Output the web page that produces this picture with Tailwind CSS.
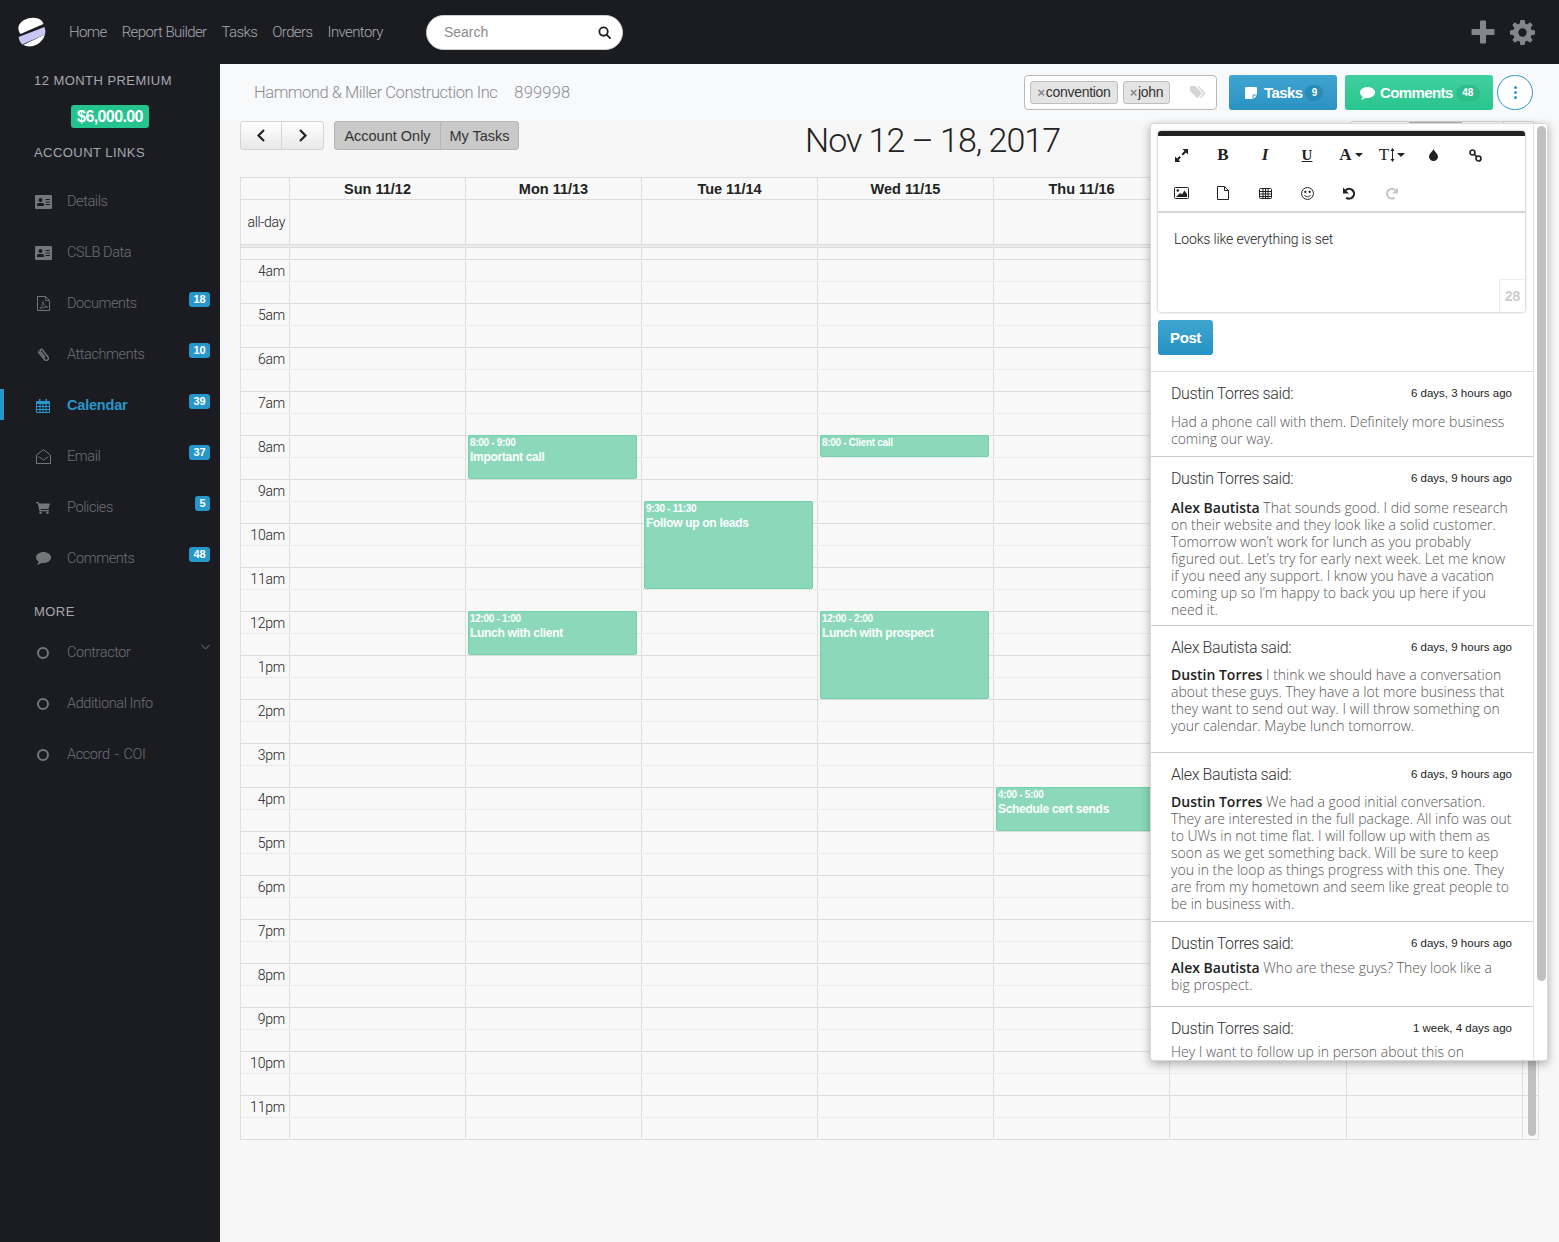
<!DOCTYPE html>
<html lang="en">
<head>
    <meta charset="UTF-8">
    <title>Calendar</title>
    <script src="https://cdn.jsdelivr.net/npm/@tailwindcss/browser@4"></script>
</head>
<body class="bg-[#f7f7f7] font-['Liberation_Sans',sans-serif]">
<div class="relative w-[1559px] h-[1242px] overflow-hidden">

    <!-- Top bar -->
    <header class="h-16 bg-[#1b1c22] flex items-center">
        <svg class="ml-[16px] w-[30px] h-[31px]" viewBox="0 0 30 31">
            <path d="M8 3 Q14 0 20 1 Q26 2 27.500 7 L4.500 17 Q1 12 3 8 Q5 4.500 8 3Z" fill="#fff"/>
            <path d="M28.500 10 Q30 14 29 17.500 L6 27.500 Q3 24 2.500 20Z" fill="#c9c6f5"/>
            <path d="M29 17.500 Q27 24 21 27.500 Q14 31 7 28Z" fill="#fff"/>
        </svg>
        <nav class="ml-[23px] flex gap-[15px] text-[15px] tracking-[-0.6px] text-[#a9abb0] font-['Roboto',sans-serif] font-light">
            <a>Home</a><a>Report Builder</a><a>Tasks</a><a>Orders</a><a>Inventory</a>
        </nav>
        <div class="ml-[43px] w-[197px] h-[35px] bg-white rounded-full border border-[#cfcfcf] flex items-center justify-between pl-[17px] pr-[11px]">
            <span class="pt-[1px] text-[14px] text-[#8a8d92]">Search</span>
            <svg class="w-[13px] h-[13px]" viewBox="0 0 14 14" fill="none" stroke="#222" stroke-width="2"><circle cx="6" cy="6" r="4.500"/><path d="M9.500 9.500 L13 13" stroke-linecap="round"/></svg>
        </div>
        <div class="ml-auto mr-[24px] flex items-center gap-[15px]">
            <svg class="w-[24px] h-[24px]" viewBox="0 0 24 24"><path d="M9 1.500a1 1 0 0 1 1-1h4a1 1 0 0 1 1 1V9h7.500a1 1 0 0 1 1 1v4a1 1 0 0 1-1 1H15v7.500a1 1 0 0 1-1 1h-4a1 1 0 0 1-1-1V15H1.500a1 1 0 0 1-1-1v-4a1 1 0 0 1 1-1H9z" fill="#85868b"/></svg>
            <svg class="w-[25px] h-[25px]" viewBox="0 0 24 24"><path fill-rule="evenodd" d="M10 0h4l.6 3.400 1.900.8L19.300 2.200l2.500 2.500-2 2.800.8 1.900L24 10v4l-3.400.6-.8 1.900 2 2.800-2.500 2.500-2.800-2-1.900.8L14 24h-4l-.6-3.400-1.900-.8-2.800 2-2.500-2.500 2-2.800-.8-1.900L0 14v-4l3.400-.6.8-1.900-2-2.800 2.500-2.500 2.800 2 1.900-.8zM12 8a4 4 0 1 0 0 8 4 4 0 0 0 0-8z" fill="#85868b"/></svg>
        </div>
    </header>

    <div class="flex h-[1178px]">
        <!-- Sidebar -->
        <aside class="w-[220px] shrink-0 bg-[#1b1c22]">
            <div class="pl-[34px] pt-[9px] text-[13px] leading-[16px] tracking-[0.45px] text-[#a5a8ae]">12 MONTH PREMIUM</div>
            <div class="ml-[71px] mt-[16px] w-[78px] h-[23px] rounded-[3px] bg-[#25c48f] text-white font-bold text-[16px] tracking-[-0.6px] flex items-center justify-center">$6,000.00</div>
            <div class="pl-[34px] mt-[17px] text-[13px] leading-[16px] tracking-[0.45px] text-[#a5a8ae]">ACCOUNT LINKS</div>

            <ul class="mt-[15px] text-[14.5px] tracking-[-0.4px] text-[#6e6f73] font-['Roboto',sans-serif] font-light">
                <li class="relative h-[51px] flex items-center pl-[35px]">
                    <svg class="w-[17px] h-[14px]" viewBox="0 0 17 14"><path fill-rule="evenodd" d="M1 0h15a1 1 0 0 1 1 1v12a1 1 0 0 1-1 1H1a1 1 0 0 1-1-1V1a1 1 0 0 1 1-1zM5.500 3a2 2 0 1 0 0 4 2 2 0 0 0 0-4zM2 11h7V9.500a1.500 1.500 0 0 0-1.500-1.500h-4A1.500 1.500 0 0 0 2 9.500zM10.500 4v1H15V4zm0 2.500v1H15v-1zm0 2.500v1H15V9z" fill="#75767a"/></svg>
                    <span class="ml-[15px]">Details</span>
                </li>
                <li class="relative h-[51px] flex items-center pl-[35px]">
                    <svg class="w-[17px] h-[14px]" viewBox="0 0 17 14"><path fill-rule="evenodd" d="M1 0h15a1 1 0 0 1 1 1v12a1 1 0 0 1-1 1H1a1 1 0 0 1-1-1V1a1 1 0 0 1 1-1zM5.500 3a2 2 0 1 0 0 4 2 2 0 0 0 0-4zM2 11h7V9.500a1.500 1.500 0 0 0-1.500-1.500h-4A1.500 1.500 0 0 0 2 9.500zM10.500 4v1H15V4zm0 2.500v1H15v-1zm0 2.500v1H15V9z" fill="#75767a"/></svg>
                    <span class="ml-[15px]">CSLB Data</span>
                </li>
                <li class="relative h-[51px] flex items-center pl-[37px]">
                    <svg class="w-[13px] h-[15px]" viewBox="0 0 13 15" fill="none" stroke="#75767a"><path d="M.5.500h8l4 4v10H.5z"/><path d="M8.500.500v4h4M3 12.500c2-2 3-5 3-7 0 3 2 5 4.500 5.500-2.500 0-5 .5-7.500 1.500z" stroke-width=".8"/></svg>
                    <span class="ml-[17px]">Documents</span>
                    <span class="absolute right-[10px] top-[14px] min-w-[21px] h-[15px] px-[3px] rounded-[3px] bg-[#2797cb] text-white font-['Liberation_Sans'] font-bold text-[11px] tracking-normal leading-[15px] text-center">18</span>
                </li>
                <li class="relative h-[51px] flex items-center pl-[37px]">
                    <svg class="w-[13px] h-[14px]" viewBox="0 0 13 14" fill="none" stroke="#75767a" stroke-width="1.400"><path d="M1 3.500 7.500 11.500a2 2 0 0 0 3.500-2.500L5.500 2a1.300 1.300 0 0 0-2.200 1.500L8 9.500"/></svg>
                    <span class="ml-[17px]">Attachments</span>
                    <span class="absolute right-[10px] top-[14px] min-w-[21px] h-[15px] px-[3px] rounded-[3px] bg-[#2797cb] text-white font-['Liberation_Sans'] font-bold text-[11px] tracking-normal leading-[15px] text-center">10</span>
                </li>
                <li class="relative h-[51px] flex items-center pl-[36px] text-[#2797cb] font-['Liberation_Sans'] font-bold tracking-[-0.2px]">
                    <span class="absolute left-0 top-[9px] w-[4px] h-[31px] bg-[#2797cb]"></span>
                    <svg class="w-[14px] h-[14px]" viewBox="0 0 14 14"><path fill-rule="evenodd" d="M3 0h1.500v2H9.500V0H11v2h2a1 1 0 0 1 1 1v10a1 1 0 0 1-1 1H1a1 1 0 0 1-1-1V3a1 1 0 0 1 1-1h2zM1 5v2h2.500V5zm3.500 0v2h2V5zm3 0v2h2V5zm3 0v2H13V5zM1 8v2h2.500V8zm3.500 0v2h2V8zm3 0v2h2V8zm3 0v2H13V8zM1 11v2h2.500v-2zm3.500 0v2h2v-2zm3 0v2h2v-2zm3 0v2H13v-2z" fill="#2797cb"/></svg>
                    <span class="ml-[17px]">Calendar</span>
                    <span class="absolute right-[10px] top-[14px] min-w-[21px] h-[15px] px-[3px] rounded-[3px] bg-[#2797cb] text-white font-bold text-[11px] tracking-normal leading-[15px] text-center">39</span>
                </li>
                <li class="relative h-[51px] flex items-center pl-[36px]">
                    <svg class="w-[15px] h-[15px]" viewBox="0 0 15 15" fill="none" stroke="#75767a"><path d="M.5 6 7.500.700 14.500 6v8.500H.5zM2.500 7.500l5 3.500 5-3.500"/></svg>
                    <span class="ml-[16px]">Email</span>
                    <span class="absolute right-[10px] top-[14px] min-w-[21px] h-[15px] px-[3px] rounded-[3px] bg-[#2797cb] text-white font-['Liberation_Sans'] font-bold text-[11px] tracking-normal leading-[15px] text-center">37</span>
                </li>
                <li class="relative h-[51px] flex items-center pl-[36px]">
                    <svg class="w-[14px] h-[12px]" viewBox="0 0 14 12"><path d="M0 0h2.500l.5 1.500H14l-1.500 5.500H4.500l.3 1H13v1.200H3.500L1.700 1.200H0z" fill="#75767a"/><circle cx="4.500" cy="10.800" r="1.200" fill="#75767a"/><circle cx="11.500" cy="10.800" r="1.200" fill="#75767a"/></svg>
                    <span class="ml-[17px]">Policies</span>
                    <span class="absolute right-[10px] top-[14px] min-w-[15px] h-[15px] rounded-[3px] bg-[#2797cb] text-white font-['Liberation_Sans'] font-bold text-[11px] tracking-normal leading-[15px] text-center">5</span>
                </li>
                <li class="relative h-[51px] flex items-center pl-[36px]">
                    <svg class="w-[15px] h-[13px]" viewBox="0 0 15 13"><path d="M7.500 0C11.600 0 15 2.400 15 5.500S11.600 11 7.500 11c-.7 0-1.300-.1-1.900-.2C4.600 11.700 3 12.500.8 12.800 1.800 11.800 2.500 10.800 2.700 9.700 1 8.700 0 7.200 0 5.500 0 2.400 3.400 0 7.500 0z" fill="#75767a"/></svg>
                    <span class="ml-[16px]">Comments</span>
                    <span class="absolute right-[10px] top-[14px] min-w-[21px] h-[15px] px-[3px] rounded-[3px] bg-[#2797cb] text-white font-['Liberation_Sans'] font-bold text-[11px] tracking-normal leading-[15px] text-center">48</span>
                </li>
            </ul>

            <div class="pl-[34px] mt-[20px] text-[13px] leading-[16px] tracking-[0.45px] text-[#a5a8ae]">MORE</div>
            <ul class="mt-[7px] text-[14.5px] tracking-[-0.4px] text-[#6e6f73] font-['Roboto',sans-serif] font-light">
                <li class="relative h-[51px] flex items-center pl-[37px]">
                    <span class="w-[12px] h-[12px] rounded-full border-2 border-[#75767a]"></span>
                    <span class="ml-[18px]">Contractor</span>
                    <svg class="absolute right-[10px] top-[17px] w-[9px] h-[6px]" viewBox="0 0 9 6" fill="none" stroke="#75767a"><path d="M.5 1 4.500 5 8.500 1"/></svg>
                </li>
                <li class="h-[51px] flex items-center pl-[37px]">
                    <span class="w-[12px] h-[12px] rounded-full border-2 border-[#75767a]"></span>
                    <span class="ml-[18px]">Additional Info</span>
                </li>
                <li class="h-[51px] flex items-center pl-[37px]">
                    <span class="w-[12px] h-[12px] rounded-full border-2 border-[#75767a]"></span>
                    <span class="ml-[18px] [word-spacing:2px]">Accord - COI</span>
                </li>
            </ul>
        </aside>

        <!-- Main content -->
        <main class="flex-1 min-w-0">
            <!-- Account header -->
            <div class="h-[57px] bg-[#f8f9fb] flex items-start pt-[11px] pl-[34px] pr-[26px]">
                <div class="mt-[6px] text-[16.5px] tracking-[-0.45px] text-[#8b8b90] font-['Roboto',sans-serif] font-light flex gap-[17px]">
                    <span>Hammond &amp; Miller Construction Inc</span><span class="tracking-[0.2px]">899998</span>
                </div>
                <div class="ml-auto flex items-center">
                    <div class="w-[193px] h-[35px] bg-white border border-[#b9b9b9] rounded-[4px] flex items-center pl-[5px]">
                        <span class="h-[23px] w-[88px] flex items-center justify-center gap-[1px] bg-[#e4e4e4] border border-[#bdbdbd] rounded-[3px] text-[14px] tracking-[-0.3px] text-[#333]"><span class="text-[#888] text-[13px] font-bold">×</span>convention</span>
                        <span class="ml-[5px] h-[23px] w-[47px] flex items-center justify-center gap-[1px] bg-[#e4e4e4] border border-[#bdbdbd] rounded-[3px] text-[14px] tracking-[-0.3px] text-[#333]"><span class="text-[#888] text-[13px] font-bold">×</span>john</span>
                        <svg class="ml-[20px] w-[15px] h-[13px]" viewBox="0 0 15 13"><path d="M0 1a1 1 0 0 1 1-1h4l6.500 6.500a1 1 0 0 1 0 1.400L7.900 11.500a1 1 0 0 1-1.400 0L0 5zM7 0h1.500L15 6.500a1 1 0 0 1 0 1.400L11 12l-1-.5L13.500 7.200z" fill="#d4d4d4"/></svg>
                    </div>
                    <button class="ml-[12px] w-[108px] h-[35px] rounded-[3px] bg-gradient-to-b from-[#40a4d0] to-[#2a92c3] text-white font-bold text-[15px] tracking-[-0.6px] flex items-center pl-[16px] pt-[1px]">
                        <svg class="w-[12px] h-[12px] mr-[7px]" viewBox="0 0 12 12"><path d="M0 1a1 1 0 0 1 1-1h10a1 1 0 0 1 1 1v6.500H8.500a1 1 0 0 0-1 1V12H1a1 1 0 0 1-1-1zM8.500 8.500H12L8.500 12z" fill="#fff"/></svg>
                        Tasks
                        <span class="ml-[3px] w-[18px] h-[16px] rounded-full bg-[#2a8ab8] text-[10px] tracking-normal leading-[16px] text-center">9</span>
                    </button>
                    <button class="ml-[8px] w-[148px] h-[35px] rounded-[3px] bg-gradient-to-b from-[#40d09f] to-[#27c58e] text-white font-bold text-[15px] tracking-[-0.6px] flex items-center pl-[15px] pt-[1px]">
                        <svg class="w-[15px] h-[13px] mr-[5px]" viewBox="0 0 15 13"><path d="M7.500 0C11.600 0 15 2.400 15 5.500S11.600 11 7.500 11c-.7 0-1.300-.1-1.900-.2C4.600 11.700 3 12.500.8 12.800 1.800 11.800 2.500 10.800 2.700 9.700 1 8.700 0 7.200 0 5.500 0 2.400 3.400 0 7.500 0z" fill="#fff"/></svg>
                        Comments
                        <span class="ml-[3px] w-[24px] h-[16px] rounded-full bg-[#2fbd8c] text-[10px] tracking-normal leading-[16px] text-center">48</span>
                    </button>
                    <button class="ml-[4px] w-[36px] h-[35px] rounded-full bg-white border border-[#2b98ca] flex flex-col items-center justify-center gap-[2px]">
                        <span class="w-[3px] h-[3px] rounded-full bg-[#2b98ca]"></span><span class="w-[3px] h-[3px] rounded-full bg-[#2b98ca]"></span><span class="w-[3px] h-[3px] rounded-full bg-[#2b98ca]"></span>
                    </button>
                </div>
            </div>

            <!-- Calendar toolbar -->
            <div class="h-[56px] relative pl-[20px] flex items-start">
                <div class="flex h-[29px] border border-[#d4d4d4] rounded-[3px] bg-gradient-to-b from-white to-[#e8e8e8]">
                    <span class="w-[41px] flex items-center justify-center border-r border-[#d4d4d4]"><svg class="w-[10px] h-[13px]" viewBox="0 0 10 13" fill="none" stroke="#222" stroke-width="2.200"><path d="M8 1 2.500 6.500 8 12"/></svg></span>
                    <span class="w-[41px] flex items-center justify-center"><svg class="w-[10px] h-[13px]" viewBox="0 0 10 13" fill="none" stroke="#222" stroke-width="2.200"><path d="M2 1 7.500 6.500 2 12"/></svg></span>
                </div>
                <div class="ml-[10px] flex h-[29px] border border-[#b5b5b5] rounded-[3px] bg-[#c9c9c9] text-[14.5px] text-[#333] leading-[28px]">
                    <span class="w-[106px] text-center border-r border-[#b5b5b5]">Account Only</span>
                    <span class="w-[77px] text-center">My Tasks</span>
                </div>
                <div class="absolute left-[585px] top-[-1px] text-[34px] leading-[40px] tracking-[-1px] text-[#222] font-['Roboto',sans-serif] font-light">Nov 12 – 18, 2017</div>
                <div class="absolute left-[1129px] top-0 flex h-[29px] w-[186px] border border-[#d4d4d4] rounded-[3px] bg-white">
                    <span class="w-[59px]"></span><span class="w-[53px] bg-[#b4b4b4]"></span><span class="w-[42px] border-r border-[#d4d4d4]"></span>
                </div>
            </div>

            <!-- Calendar -->
            <div class="ml-[20px] w-[1299px] h-[963px] border border-[#ddd] bg-[#f8f8f8] text-[#222]">
                <div class="flex h-[22px] border-b border-[#ddd] font-bold text-[14.5px] leading-[22px] text-center">
                    <div class="w-[48px]"></div>
                    <div class="w-[176px] border-l border-[#ddd]">Sun 11/12</div>
                    <div class="w-[176px] border-l border-[#ddd]">Mon 11/13</div>
                    <div class="w-[176px] border-l border-[#ddd]">Tue 11/14</div>
                    <div class="w-[176px] border-l border-[#ddd]">Wed 11/15</div>
                    <div class="w-[176px] border-l border-[#ddd]">Thu 11/16</div>
                    <div class="w-[177px] border-l border-[#ddd]"></div>
                    <div class="w-[177px] border-l border-[#ddd]"></div>
                </div>
                <div class="flex h-[44px]">
                    <div class="w-[48px] pr-[4px] text-right text-[14px] tracking-[-0.3px] leading-[45px] font-['Roboto',sans-serif] font-light">all-day</div>
                    <div class="w-[176px] border-l border-[#ddd]"></div>
                    <div class="w-[176px] border-l border-[#ddd]"></div>
                    <div class="w-[176px] border-l border-[#ddd]"></div>
                    <div class="w-[176px] border-l border-[#ddd]"></div>
                    <div class="w-[176px] border-l border-[#ddd]"></div>
                    <div class="w-[177px] border-l border-[#ddd]"></div>
                    <div class="w-[177px] border-l border-[#ddd]"></div>
                </div>
                <div class="h-[4px] bg-[#ececec] border-y border-[#ddd]"></div>

                <!-- Time grid -->
                <div class="relative text-[14px] tracking-[-0.2px] font-['Roboto',sans-serif] font-light">
                    <div class="h-[11px]"></div>
                    <div class="h-11 border-t border-[#ddd]"><div class="h-[22px] border-b border-dotted border-[#ddd] leading-[22px]"><span class="block w-[44px] text-right">4am</span></div></div>
                    <div class="h-11 border-t border-[#ddd]"><div class="h-[22px] border-b border-dotted border-[#ddd] leading-[22px]"><span class="block w-[44px] text-right">5am</span></div></div>
                    <div class="h-11 border-t border-[#ddd]"><div class="h-[22px] border-b border-dotted border-[#ddd] leading-[22px]"><span class="block w-[44px] text-right">6am</span></div></div>
                    <div class="h-11 border-t border-[#ddd]"><div class="h-[22px] border-b border-dotted border-[#ddd] leading-[22px]"><span class="block w-[44px] text-right">7am</span></div></div>
                    <div class="h-11 border-t border-[#ddd]"><div class="h-[22px] border-b border-dotted border-[#ddd] leading-[22px]"><span class="block w-[44px] text-right">8am</span></div></div>
                    <div class="h-11 border-t border-[#ddd]"><div class="h-[22px] border-b border-dotted border-[#ddd] leading-[22px]"><span class="block w-[44px] text-right">9am</span></div></div>
                    <div class="h-11 border-t border-[#ddd]"><div class="h-[22px] border-b border-dotted border-[#ddd] leading-[22px]"><span class="block w-[44px] text-right">10am</span></div></div>
                    <div class="h-11 border-t border-[#ddd]"><div class="h-[22px] border-b border-dotted border-[#ddd] leading-[22px]"><span class="block w-[44px] text-right">11am</span></div></div>
                    <div class="h-11 border-t border-[#ddd]"><div class="h-[22px] border-b border-dotted border-[#ddd] leading-[22px]"><span class="block w-[44px] text-right">12pm</span></div></div>
                    <div class="h-11 border-t border-[#ddd]"><div class="h-[22px] border-b border-dotted border-[#ddd] leading-[22px]"><span class="block w-[44px] text-right">1pm</span></div></div>
                    <div class="h-11 border-t border-[#ddd]"><div class="h-[22px] border-b border-dotted border-[#ddd] leading-[22px]"><span class="block w-[44px] text-right">2pm</span></div></div>
                    <div class="h-11 border-t border-[#ddd]"><div class="h-[22px] border-b border-dotted border-[#ddd] leading-[22px]"><span class="block w-[44px] text-right">3pm</span></div></div>
                    <div class="h-11 border-t border-[#ddd]"><div class="h-[22px] border-b border-dotted border-[#ddd] leading-[22px]"><span class="block w-[44px] text-right">4pm</span></div></div>
                    <div class="h-11 border-t border-[#ddd]"><div class="h-[22px] border-b border-dotted border-[#ddd] leading-[22px]"><span class="block w-[44px] text-right">5pm</span></div></div>
                    <div class="h-11 border-t border-[#ddd]"><div class="h-[22px] border-b border-dotted border-[#ddd] leading-[22px]"><span class="block w-[44px] text-right">6pm</span></div></div>
                    <div class="h-11 border-t border-[#ddd]"><div class="h-[22px] border-b border-dotted border-[#ddd] leading-[22px]"><span class="block w-[44px] text-right">7pm</span></div></div>
                    <div class="h-11 border-t border-[#ddd]"><div class="h-[22px] border-b border-dotted border-[#ddd] leading-[22px]"><span class="block w-[44px] text-right">8pm</span></div></div>
                    <div class="h-11 border-t border-[#ddd]"><div class="h-[22px] border-b border-dotted border-[#ddd] leading-[22px]"><span class="block w-[44px] text-right">9pm</span></div></div>
                    <div class="h-11 border-t border-[#ddd]"><div class="h-[22px] border-b border-dotted border-[#ddd] leading-[22px]"><span class="block w-[44px] text-right">10pm</span></div></div>
                    <div class="h-11 border-t border-[#ddd]"><div class="h-[22px] border-b border-dotted border-[#ddd] leading-[22px]"><span class="block w-[44px] text-right">11pm</span></div></div>

                    <!-- Day columns and events lie over the rows -->
                    <div class="absolute inset-0 left-[48px] flex font-['Liberation_Sans'] tracking-[-0.3px] text-white">
                        <div class="w-[176px] border-l border-[#ddd]"></div>
                        <div class="relative w-[176px] border-l border-[#ddd]">
                            <div class="absolute left-[2px] w-[169px] top-[187px] h-[44px] bg-[#8bd8bb] border border-[#72d0ab] rounded-[2px] px-[1px] font-bold text-[12px] leading-[14px]"><div class="text-[10px]">8:00 - 9:00</div>Important call</div>
                            <div class="absolute left-[2px] w-[169px] top-[363px] h-[44px] bg-[#8bd8bb] border border-[#72d0ab] rounded-[2px] px-[1px] font-bold text-[12px] leading-[14px]"><div class="text-[10px]">12:00 - 1:00</div>Lunch with client</div>
                        </div>
                        <div class="relative w-[176px] border-l border-[#ddd]">
                            <div class="absolute left-[2px] w-[169px] top-[253px] h-[88px] bg-[#8bd8bb] border border-[#72d0ab] rounded-[2px] px-[1px] font-bold text-[12px] leading-[14px]"><div class="text-[10px]">9:30 - 11:30</div>Follow up on leads</div>
                        </div>
                        <div class="relative w-[176px] border-l border-[#ddd]">
                            <div class="absolute left-[2px] w-[169px] top-[187px] h-[22px] bg-[#8bd8bb] border border-[#72d0ab] rounded-[2px] px-[1px] font-bold text-[10px] leading-[14px]">8:00 - Client call</div>
                            <div class="absolute left-[2px] w-[169px] top-[363px] h-[88px] bg-[#8bd8bb] border border-[#72d0ab] rounded-[2px] px-[1px] font-bold text-[12px] leading-[14px]"><div class="text-[10px]">12:00 - 2:00</div>Lunch with prospect</div>
                        </div>
                        <div class="relative w-[176px] border-l border-[#ddd]">
                            <div class="absolute left-[2px] w-[169px] top-[539px] h-[44px] bg-[#8bd8bb] border border-[#72d0ab] rounded-[2px] px-[1px] font-bold text-[12px] leading-[14px]"><div class="text-[10px]">4:00 - 5:00</div>Schedule cert sends</div>
                        </div>
                        <div class="w-[177px] border-l border-[#ddd]"></div>
                        <div class="relative w-[177px] border-x border-[#ddd]"></div>
                        <div class="absolute right-[2px] top-[-100px] bottom-[3px] w-[8px] rounded-full bg-[#c0c0c0]"></div>
                    </div>
                </div>
            </div>
        </main>
    </div>

    <!-- Comments popover -->
    <div class="absolute left-[1150px] top-[123px] w-[398px] h-[938px] bg-white border border-[#d8d8d8] rounded-[3px] shadow-[0_3px_10px_rgba(0,0,0,0.3)] overflow-hidden">
        <div class="w-[383px] h-full border-r border-[#e4e4e4] overflow-hidden">
            <div class="ml-[7px] mt-[7px] w-[367px] h-[181px] rounded-[3px] bg-white shadow-[0_0_3px_rgba(0,0,0,0.35)]">
                <div class="h-[5px] bg-[#222] rounded-t-[3px]"></div>
                <div class="h-[77px] grid grid-cols-[repeat(8,42px)] grid-rows-[38px_38px] pl-[2px] border-b-2 border-[#d6d6d6] text-[#222]">
                    <span class="flex items-center justify-center"><svg class="w-[13px] h-[13px]" viewBox="0 0 13 13" fill="#222"><path d="M7.500 0H13v5.500L11 3.500 8 6.500 6.500 5l3-3zM0 7.500 2 9.500 4.500 7 6 8.500 3.500 11l2 2H0z"/></svg></span>
                    <span class="flex items-center justify-center font-['Liberation_Serif'] font-bold text-[17px]">B</span>
                    <span class="flex items-center justify-center font-['Liberation_Serif'] font-bold italic text-[17px]">I</span>
                    <span class="flex items-center justify-center font-['Liberation_Serif'] font-bold underline text-[15px]">U</span>
                    <span class="flex items-center justify-center pl-[4px] font-['Liberation_Serif'] font-bold text-[17px]">A<span class="ml-[3px] border-x-[4px] border-x-transparent border-t-[4px] border-t-[#222]"></span></span>
                    <span class="flex items-center justify-center pl-[2px] font-['Liberation_Serif'] text-[17px]">T<svg class="w-[5px] h-[14px] mx-[1px]" viewBox="0 0 5 14" fill="#222"><path d="M2.500 0 4.500 3H3v8h1.500l-2 3-2-3H2V3H.5z"/></svg><span class="ml-[1px] border-x-[4px] border-x-transparent border-t-[4px] border-t-[#222]"></span></span>
                    <span class="flex items-center justify-center"><svg class="w-[9px] h-[12px]" viewBox="0 0 9 12" fill="#222"><path d="M4.500 0C5.500 2.500 9 5 9 7.800A4.500 4.200 0 0 1 0 7.800C0 5 3.500 2.500 4.500 0z"/></svg></span>
                    <span class="flex items-center justify-center"><svg class="w-[13px] h-[13px]" viewBox="0 0 13 13" fill="none" stroke="#222" stroke-width="1.700"><rect x="1" y="1" width="5" height="5" rx="2.500"/><rect x="7" y="7" width="5" height="5" rx="2.500"/><path d="M5 5 8 8"/></svg></span>

                    <span class="flex items-center justify-center"><svg class="w-[15px] h-[12px]" viewBox="0 0 15 12"><rect x=".5" y=".5" width="14" height="11" rx="1" fill="#fff" stroke="#222"/><circle cx="3.800" cy="3.500" r="1.300" fill="#222"/><path d="M2 10 6 6 8 7.500 10.500 3.500 13 7v3z" fill="#222"/></svg></span>
                    <span class="flex items-center justify-center"><svg class="w-[12px] h-[14px]" viewBox="0 0 12 14" fill="none" stroke="#222"><path d="M.5.500h7l4 4v9H.5zM7.500.500v4h4"/></svg></span>
                    <span class="flex items-center justify-center"><svg class="w-[13px] h-[11px]" viewBox="0 0 13 11" fill="none" stroke="#222"><rect x=".5" y=".5" width="12" height="10" rx="1"/><path d="M0 3.500h13M0 6h13M0 8.500h13M4 0v11M6.500 0v11M9 0v11"/></svg></span>
                    <span class="flex items-center justify-center"><svg class="w-[13px] h-[13px]" viewBox="0 0 12 12" fill="none" stroke="#222" stroke-width=".9"><circle cx="6" cy="6" r="5.500"/><circle cx="4" cy="4.500" r=".7" fill="#222"/><circle cx="8" cy="4.500" r=".7" fill="#222"/><path d="M3 7.500c1.500 2 4.500 2 6 0"/></svg></span>
                    <span class="flex items-center justify-center"><svg class="w-[13px] h-[13px]" viewBox="0 0 12 12" fill="none" stroke="#222" stroke-width="2"><path d="M2.500 3A4.500 4.500 0 1 1 3 9.800"/><path d="M0 0.500 5.500 6 0 6z" fill="#222" stroke="none"/></svg></span>
                    <span class="flex items-center justify-center"><svg class="w-[13px] h-[13px]" viewBox="0 0 12 12" fill="none" stroke="#c8c8c8" stroke-width="2"><path d="M9.500 3A4.500 4.500 0 1 0 9 9.800"/><path d="M12 .5 6.500 6 12 6z" fill="#c8c8c8" stroke="none"/></svg></span>
                </div>
                <div class="relative h-[99px] pl-[16px] pt-[16px] text-[14px] leading-[20px] tracking-[-0.15px] text-[#222] font-['Roboto',sans-serif] font-light">
                    Looks like everything is set
                    <span class="absolute right-0 bottom-0 w-[26px] h-[33px] border-l border-t border-[#eee] font-['Liberation_Sans'] font-bold text-[14px] text-[#ccc] text-center leading-[32px]">28</span>
                </div>
            </div>
            <button class="ml-[7px] mt-[8px] block w-[55px] h-[35px] pt-[1px] rounded-[3px] bg-gradient-to-b from-[#3fa5d0] to-[#2492c4] text-white font-bold text-[15px] tracking-[-0.4px]">Post</button>

            <div class="mt-[16px] border-t border-[#ddd]">
                <div class="h-[85px] border-b border-[#ccc] pl-[20px] pr-[21px] pt-[13px]">
                    <div class="flex items-center justify-between h-[18px]"><span class="text-[16px] tracking-[-0.4px] text-[#333] font-['Roboto',sans-serif] font-light">Dustin Torres said:</span><span class="text-[11.5px] text-[#222]">6 days, 3 hours ago</span></div>
                    <p class="mt-[10px] font-['Open_Sans',sans-serif] font-light text-[14px] leading-[17px] text-[#555]">Had a phone call with them. Definitely more business<br>coming our way.</p>
                </div>
                <div class="h-[169px] border-b border-[#ccc] pl-[20px] pr-[21px] pt-[13px]">
                    <div class="flex items-center justify-between h-[18px]"><span class="text-[16px] tracking-[-0.4px] text-[#333] font-['Roboto',sans-serif] font-light">Dustin Torres said:</span><span class="text-[11.5px] text-[#222]">6 days, 9 hours ago</span></div>
                    <p class="mt-[11px] font-['Open_Sans',sans-serif] font-light text-[14px] leading-[17px] text-[#555]"><b class="font-semibold text-[#222]">Alex Bautista</b> That sounds good. I did some research<br>on their website and they look like a solid customer.<br>Tomorrow won’t work for lunch as you probably<br>figured out. Let’s try for early next week. Let me know<br>if you need any support. I know you have a vacation<br>coming up so I’m happy to back you up here if you<br>need it.</p>
                </div>
                <div class="h-[127px] border-b border-[#ccc] pl-[20px] pr-[21px] pt-[13px]">
                    <div class="flex items-center justify-between h-[18px]"><span class="text-[16px] tracking-[-0.4px] text-[#333] font-['Roboto',sans-serif] font-light">Alex Bautista said:</span><span class="text-[11.5px] text-[#222]">6 days, 9 hours ago</span></div>
                    <p class="mt-[9px] font-['Open_Sans',sans-serif] font-light text-[14px] leading-[17px] text-[#555]"><b class="font-semibold text-[#222]">Dustin Torres</b> I think we should have a conversation<br>about these guys. They have a lot more business that<br>they want to send out way. I will throw something on<br>your calendar. Maybe lunch tomorrow.</p>
                </div>
                <div class="h-[169px] border-b border-[#ccc] pl-[20px] pr-[21px] pt-[13px]">
                    <div class="flex items-center justify-between h-[18px]"><span class="text-[16px] tracking-[-0.4px] text-[#333] font-['Roboto',sans-serif] font-light">Alex Bautista said:</span><span class="text-[11.5px] text-[#222]">6 days, 9 hours ago</span></div>
                    <p class="mt-[9px] font-['Open_Sans',sans-serif] font-light text-[14px] leading-[17px] text-[#555]"><b class="font-semibold text-[#222]">Dustin Torres</b> We had a good initial conversation.<br>They are interested in the full package. All info was out<br>to UWs in not time flat. I will follow up with them as<br>soon as we get something back. Will be sure to keep<br>you in the loop as things progress with this one. They<br>are from my hometown and seem like great people to<br>be in business with.</p>
                </div>
                <div class="h-[85px] border-b border-[#ccc] pl-[20px] pr-[21px] pt-[13px]">
                    <div class="flex items-center justify-between h-[18px]"><span class="text-[16px] tracking-[-0.4px] text-[#333] font-['Roboto',sans-serif] font-light">Dustin Torres said:</span><span class="text-[11.5px] text-[#222]">6 days, 9 hours ago</span></div>
                    <p class="mt-[6px] font-['Open_Sans',sans-serif] font-light text-[14px] leading-[17px] text-[#555]"><b class="font-semibold text-[#222]">Alex Bautista</b> Who are these guys? They look like a<br>big prospect.</p>
                </div>
                <div class="pl-[20px] pr-[21px] pt-[13px]">
                    <div class="flex items-center justify-between h-[18px]"><span class="text-[16px] tracking-[-0.4px] text-[#333] font-['Roboto',sans-serif] font-light">Dustin Torres said:</span><span class="text-[11.5px] text-[#222]">1 week, 4 days ago</span></div>
                    <p class="mt-[5px] font-['Open_Sans',sans-serif] font-light text-[14px] leading-[17px] text-[#555]">Hey I want to follow up in person about this on</p>
                </div>
            </div>
        </div>
        <div class="absolute left-[386px] top-[2px] w-[9px] h-[855px] rounded-full bg-[#c0c0c0]"></div>
    </div>
</div>
</body>
</html>
